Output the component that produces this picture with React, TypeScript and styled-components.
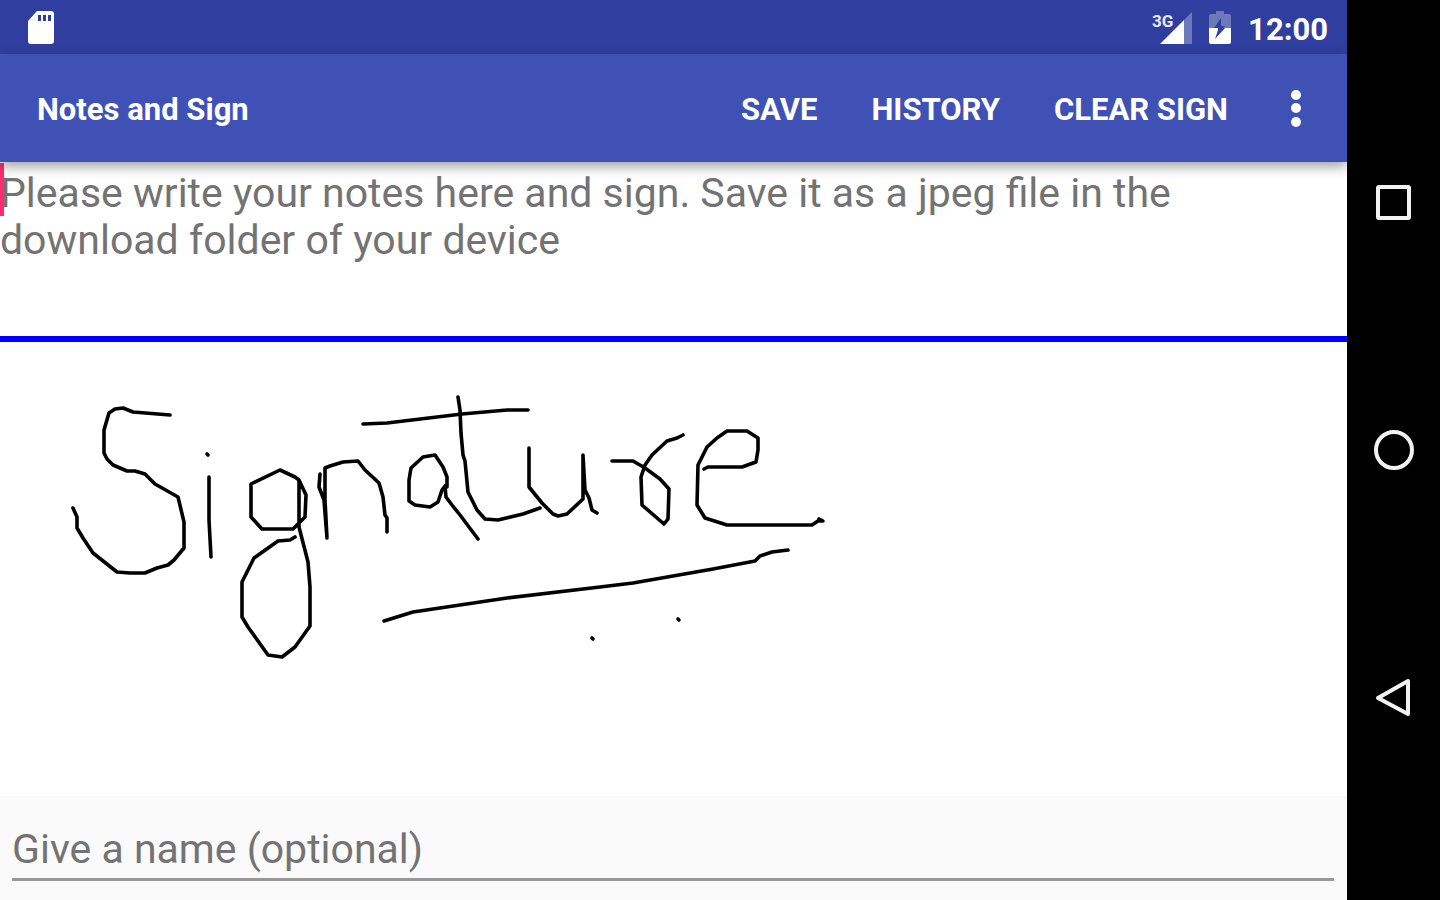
import React from "react";
import styled, { createGlobalStyle } from "styled-components";

const GlobalStyle = createGlobalStyle`
  *, *::before, *::after { box-sizing: border-box; }
  body {
    margin: 0;
    background: #ffffff;
    font-family: Roboto, "Liberation Sans", sans-serif;
  }
  button, input, textarea { font-family: inherit; }
`;

const Device = styled.div`
  display: grid;
  grid-template-columns: minmax(0, 1fr) 93px;
  min-height: 100vh;
`;

const Screen = styled.main`
  display: flex;
  flex-direction: column;
  min-width: 0;
  background: #fafafa;
`;

const StatusBar = styled.div`
  display: flex;
  align-items: center;
  justify-content: space-between;
  height: 54px;
  padding: 2px 19px 0 28px;
  background: #303f9f;
  color: #ffffff;
`;

const StatusGroup = styled.div`
  display: flex;
  align-items: center;
  gap: 17px;
`;

const Clock = styled.time`
  padding-top: 3px;
  font-size: 31px;
  line-height: 40px;
  font-weight: 700;
`;

const Toolbar = styled.header`
  position: relative;
  z-index: 1;
  display: flex;
  align-items: center;
  height: 108px;
  padding: 0 24px 0 37px;
  background: #3f51b5;
  color: #ffffff;
  box-shadow: 0 4px 12px rgba(0, 0, 0, 0.4);
`;

const Title = styled.h1`
  flex: 1;
  margin: 0;
  padding-top: 4px;
  font-size: 31px;
  line-height: 40px;
  font-weight: 700;
  white-space: nowrap;
`;

const Actions = styled.div`
  display: flex;
  align-items: center;
`;

const ActionButton = styled.button`
  height: 72px;
  padding: 4px 27px 0;
  border: 0;
  background: none;
  color: inherit;
  font-size: 31px;
  line-height: 40px;
  font-weight: 700;
  white-space: nowrap;
  cursor: pointer;
`;

const MenuButton = styled.button`
  display: grid;
  place-items: center;
  width: 54px;
  height: 72px;
  margin-left: 14px;
  padding: 0;
  border: 0;
  background: none;
  color: inherit;
  cursor: pointer;
`;

const NotesPanel = styled.section`
  position: relative;
  height: 180px;
  background: #ffffff;
  border-bottom: 6px solid #0000ff;
`;

const NotesInput = styled.textarea`
  display: block;
  width: 100%;
  height: 100%;
  padding: 8px 0 0;
  border: 0;
  outline: 0;
  resize: none;
  background: transparent;
  color: #212121;
  font-size: 41px;
  line-height: 47px;

  &::placeholder {
    color: #737373;
    opacity: 1;
  }
`;

const Caret = styled.span`
  position: absolute;
  top: 1px;
  left: 0;
  width: 4px;
  height: 53px;
  background: #ff2d6f;
`;

const SignaturePad = styled.section`
  flex: 1;
  min-height: 454px;
  background: #ffffff;

  svg {
    display: block;
  }
`;

const NameBar = styled.footer`
  height: 104px;
  padding: 24px 13px 0 12px;
`;

const NameInput = styled.input`
  display: block;
  width: 100%;
  height: 61px;
  padding: 0;
  border: 0;
  border-bottom: 3px solid #989898;
  outline: 0;
  background: transparent;
  color: #212121;
  font-size: 41px;
  line-height: 47px;

  &::placeholder {
    color: #737373;
    opacity: 1;
  }
`;

const SystemNav = styled.nav`
  display: flex;
  flex-direction: column;
  padding: 79px 0;
  background: #000000;
`;

const NavButton = styled.button`
  flex: 1;
  display: grid;
  place-items: center;
  padding: 0;
  border: 0;
  background: none;
  color: #f2f2f2;
  cursor: pointer;
`;

const strokes = [
  "170,415 133,412 123,408 115,409 109,413 104,430 104,453 107,459 113,465 127,471 135,471 145,474 155,484 178,497 184,522 184,548 174,560 168,565 157,568 145,573 130,573 117,572 93,553 83,538 77,528 77,517 73,508",
  "207,454 208,455",
  "209,477 209,520 211,557",
  "299,480 295,477 280,470 251,484 251,517 262,529 293,529 305,517 306,495 299,480 299,527 308,562 310,587 310,626 295,647 282,657 268,655 248,627 242,617 242,582 254,558 278,541 290,540 295,537",
  "320,474 319,487 324,500 327,538 325,500 325,468 330,466 343,462 358,461 365,470 379,483 383,497 385,515 387,518 387,532",
  "447,487 447,477 443,467 435,455 423,457 411,468 409,480 409,501 415,505 430,507 438,502 442,490 445,486 446,497 452,505 460,515 478,539",
  "363,424 387,423 462,414 507,410 528,410",
  "458,397 460,410 461,433 463,455 465,461 468,492 473,502 477,510 485,519 498,520 523,514 540,508",
  "529,448 529,487 542,503 553,514 558,516 567,514 583,499 583,455 585,490 589,498 592,510 597,513",
  "612,461 633,461 645,468 660,479 669,489 668,519 664,524 642,505 641,477 645,465 652,455 667,441 677,438 683,435",
  "704,469 708,467 742,467 756,462 758,450 758,438 747,431 727,431 717,438 707,447 698,465 697,505 705,518 727,525 812,525 818,521 823,521 819,519",
  "384,621 413,612 507,598 600,587 633,583 713,569 755,561 760,556 772,552 788,550",
  "678,619 679,620",
  "592,638 593,639",
];

const SdCardIcon = () => (
  <svg width="26" height="34" viewBox="0 0 26 34" aria-hidden="true">
    <path
      fill="#fff"
      fillRule="evenodd"
      d="M9 0H23Q26 0 26 3V30Q26 33 23 33H3Q0 33 0 30V10ZM10 4V10H13V4ZM15 4V10H18V4ZM20 4V10H23V4Z"
    />
  </svg>
);

const SignalIcon = () => (
  <svg width="40" height="34" viewBox="0 0 40 34" aria-label="3G signal">
    <path fill="#fff" fillOpacity="0.3" d="M40 1V33H32V9Z" />
    <path fill="#fff" d="M32 9V33H8Z" />
    <text x="0" y="16" fill="#e8eaf6" fontSize="17" fontWeight="700">
      3G
    </text>
  </svg>
);

const BatteryIcon = () => (
  <svg width="22" height="34" viewBox="1 0 22 34" aria-hidden="true">
    <path
      fill="#fff"
      fillOpacity="0.3"
      d="M8 0H16V3H21Q23 3 23 5V17H15L17 15H13V7L6 17H1V5Q1 3 3 3H8Z"
    />
    <path fill="#fff" d="M1 17H10V19L7 28L17 17H23V31Q23 33 21 33H3Q1 33 1 31Z" />
  </svg>
);

const MoreIcon = () => (
  <svg width="12" height="40" viewBox="0 0 12 40" fill="#fff" aria-hidden="true">
    <circle cx="6" cy="7" r="5" />
    <circle cx="6" cy="20" r="5" />
    <circle cx="6" cy="34" r="5" />
  </svg>
);

const navItems = [
  { label: "Overview", shape: <rect x="4" y="4" width="31" height="31" rx="1" /> },
  { label: "Home", shape: <circle cx="20" cy="20" r="18" /> },
  { label: "Back", shape: <path d="M34 4V37L4 21Z" /> },
];

export default function App() {
  return (
    <>
      <GlobalStyle />
      <Device>
        <Screen>
          <StatusBar>
            <SdCardIcon />
            <StatusGroup>
              <SignalIcon />
              <BatteryIcon />
              <Clock>12:00</Clock>
            </StatusGroup>
          </StatusBar>
          <Toolbar>
            <Title>Notes and Sign</Title>
            <Actions>
              <ActionButton type="button">SAVE</ActionButton>
              <ActionButton type="button">HISTORY</ActionButton>
              <ActionButton type="button">CLEAR SIGN</ActionButton>
              <MenuButton type="button" aria-label="More options">
                <MoreIcon />
              </MenuButton>
            </Actions>
          </Toolbar>
          <NotesPanel>
            <NotesInput
              aria-label="Notes"
              placeholder="Please write your notes here and sign. Save it as a jpeg file in the download folder of your device"
            />
            <Caret />
          </NotesPanel>
          <SignaturePad aria-label="Signature">
            <svg
              width="100%"
              height="454"
              viewBox="0 342 1347 454"
              preserveAspectRatio="xMinYMin meet"
              fill="none"
              stroke="#000"
              strokeWidth="3.6"
              strokeLinecap="round"
              strokeLinejoin="round"
            >
              {strokes.map((points) => (
                <polyline key={points} points={points} />
              ))}
            </svg>
          </SignaturePad>
          <NameBar>
            <NameInput type="text" aria-label="Name" placeholder="Give a name (optional)" />
          </NameBar>
        </Screen>
        <SystemNav aria-label="System navigation">
          {navItems.map(({ label, shape }) => (
            <NavButton key={label} type="button" aria-label={label}>
              <svg
                width="40"
                height="40"
                viewBox="0 0 40 40"
                fill="none"
                stroke="currentColor"
                strokeWidth="4"
                strokeLinejoin="round"
              >
                {shape}
              </svg>
            </NavButton>
          ))}
        </SystemNav>
      </Device>
    </>
  );
}
